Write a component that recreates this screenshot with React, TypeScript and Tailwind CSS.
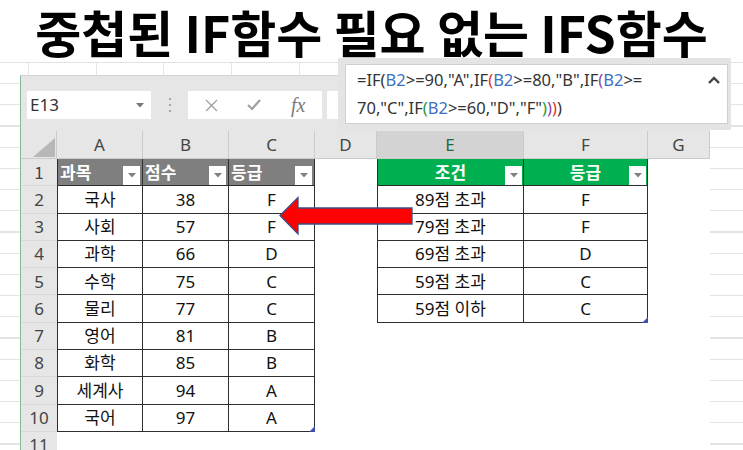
import React from "react";

const UI = '"Noto Sans", "Noto Sans CJK KR", sans-serif';
const KR = '"Noto Sans CJK KR", "Noto Sans", sans-serif';

const LINE = "border-[#2e2e2e]";

function RowHead({ n }: { n: number }) {
  return (
    <div className="w-[36px] shrink-0 bg-[#e6e6e6] border-b border-[#dadada] flex items-center justify-center text-[17px] text-[#444]">
      {n}
    </div>
  );
}

function FilterButton() {
  return (
    <div className="w-[17px] h-[19px] bg-white flex items-center justify-center">
      <svg width="8" height="5" viewBox="0 0 8 5">
        <polygon points="0,0 8,0 4,4.5" fill="#808080" />
      </svg>
    </div>
  );
}

function Blank({ w }: { w: string }) {
  return <div className={`${w} shrink-0 bg-white`} />;
}

function Data({
  w,
  text,
  left,
  handle,
}: {
  w: string;
  text: string;
  left?: boolean;
  handle?: boolean;
}) {
  return (
    <div
      className={`${w} shrink-0 relative bg-white border-b border-r ${LINE} ${left ? "border-l" : ""} flex items-center justify-center text-[17px] text-[#111]`}
    >
      {text}
      {handle && (
        <div className="absolute right-[-1px] bottom-[-1px] w-0 h-0 border-l-[6px] border-l-transparent border-b-[6px] border-b-[#3d4fb5]" />
      )}
    </div>
  );
}

function GrayHead({ w, text, left }: { w: string; text: string; left?: boolean }) {
  return (
    <div
      className={`${w} shrink-0 bg-[#7f7f7f] border-b border-r ${LINE} ${left ? "border-l" : ""} flex items-end justify-between pl-[2px] pr-[2px] text-white font-bold text-[17px]`}
    >
      <span className="self-center">{text}</span>
      <FilterButton />
    </div>
  );
}

function GreenHead({ w, text, left }: { w: string; text: string; left?: boolean }) {
  return (
    <div
      className={`${w} shrink-0 relative bg-[#00b050] border-b border-r ${LINE} ${left ? "border-l" : ""} flex items-center justify-center text-white font-bold text-[17px]`}
    >
      {text}
      <div className="absolute right-[1px] bottom-0">
        <FilterButton />
      </div>
    </div>
  );
}

const scores: [string, string, string][] = [
  ["국사", "38", "F"],
  ["사회", "57", "F"],
  ["과학", "66", "D"],
  ["수학", "75", "C"],
  ["물리", "77", "C"],
  ["영어", "81", "B"],
  ["화학", "85", "B"],
  ["세계사", "94", "A"],
  ["국어", "97", "A"],
];

const rules: [string, string][] = [
  ["89점 초과", "F"],
  ["79점 초과", "F"],
  ["69점 초과", "D"],
  ["59점 초과", "C"],
  ["59점 이하", "C"],
];

function ColHead({ w, label, active }: { w: string; label: string; active?: boolean }) {
  return (
    <div
      className={`${w} shrink-0 border-r border-b border-[#cbcbcb] flex items-center justify-center text-[17px] ${active ? "bg-[#d3d3d3] text-[#1e6b3c]" : "bg-[#e6e6e6] text-[#444]"}`}
    >
      {label}
    </div>
  );
}

function FormulaBar() {
  const ref = "text-[#3d70c2]";
  return (
    <div className="absolute left-[338px] top-[58px] w-[393px] h-[72px] bg-[#e4e4e4] pt-[6px] pl-[7px] pr-[3px] pb-[6px]">
      <div className="relative h-full bg-white border border-[#cfcfcf] pl-[11px] pt-[1px] text-[16.5px] leading-[28px] text-[#333]" style={{ fontFamily: UI }}>
        <div>
          =IF(<span className={ref}>B2</span>&gt;=90,"A",IF<span className="text-[#d9342b]">(</span>
          <span className={ref}>B2</span>&gt;=80,"B",IF<span className="text-[#8a3fb0]">(</span>
          <span className={ref}>B2</span>&gt;=
        </div>
        <div>
          70,"C",IF<span className="text-[#1e9a3e]">(</span>
          <span className={ref}>B2</span>&gt;=60,"D","F"
          <span className="text-[#1e9a3e]">)</span>
          <span className="text-[#8a3fb0]">)</span>
          <span className="text-[#d9342b]">)</span>)
        </div>
        <svg className="absolute right-[6px] top-[10px]" width="14" height="10" viewBox="0 0 14 10">
          <polyline points="2,8 7,3 12,8" fill="none" stroke="#444" strokeWidth="2.4" />
        </svg>
      </div>
    </div>
  );
}

function Arrow() {
  return (
    <svg className="absolute left-[276px] top-[194px]" width="140" height="45" viewBox="0 0 140 45">
      <polygon
        points="4,21.5 22,3.5 22,14 136,14 136,30 22,30 22,40"
        fill="#ff0000"
        stroke="#3b4f86"
        strokeWidth="1.3"
        strokeLinejoin="miter"
      />
    </svg>
  );
}

export default function App() {
  return (
    <div className="relative w-[743px] h-[450px] overflow-hidden bg-white" style={{ fontFamily: UI }}>
      <div
        className="h-[63px] border-b border-[#e2e2e2] flex items-center justify-center text-[50px] font-bold leading-[60px] text-black"
        style={{ fontFamily: KR }}
      >
        중첩된 IF함수 필요 없는 IFS함수
      </div>

      <div className="flex h-[387px] bg-[image:repeating-linear-gradient(to_bottom,transparent_0px,transparent_20px,#e4e4e4_20px,#e4e4e4_21.2px),repeating-linear-gradient(to_right,transparent_0px,transparent_28px,#e6e6e6_28px,#e6e6e6_29px,transparent_29px,transparent_67.7px)]">
        <div className="w-[20px] shrink-0" />
        <div className="w-[690px] shrink-0 mt-[12px] h-[375px] overflow-hidden bg-[#e6e6e6] border-l border-[#86bb98] border-t border-t-[#d4d4d4] flex flex-col">
          {/* name box and function buttons */}
          <div className="h-[55px] shrink-0 flex items-start pt-[15px]">
            <div className="ml-[6px] w-[124px] h-[28px] bg-white flex items-center justify-between pl-[3px] pr-[7px] text-[17px] text-[#333]">
              <span>E13</span>
              <svg width="8" height="5" viewBox="0 0 8 5">
                <polygon points="0,0 8,0 4,4.5" fill="#777" />
              </svg>
            </div>
            <div className="w-[37px] h-[28px] flex flex-col items-center justify-center gap-[4px]">
              <div className="w-[2px] h-[2px] bg-[#a6a6a6]" />
              <div className="w-[2px] h-[2px] bg-[#a6a6a6]" />
              <div className="w-[2px] h-[2px] bg-[#a6a6a6]" />
            </div>
            <div className="w-[134px] h-[28px] bg-white flex items-center">
              <svg className="ml-[17px]" width="13" height="13" viewBox="0 0 13 13">
                <path d="M1 1 L12 12 M12 1 L1 12" stroke="#a0a0a0" strokeWidth="1.3" />
              </svg>
              <svg className="ml-[29px]" width="14" height="12" viewBox="0 0 14 12">
                <path d="M1 6 L5 10 L13 1" fill="none" stroke="#a0a0a0" strokeWidth="2.2" />
              </svg>
              <span
                className="ml-[30px] italic text-[20px] text-[#7a7a7a] leading-none"
                style={{ fontFamily: '"Liberation Serif", serif' }}
              >
                fx
              </span>
            </div>
            <div className="ml-[5px] flex-1 h-[28px] bg-white" />
          </div>

          {/* column headers */}
          <div className="flex h-[28px] shrink-0">
            <div className="w-[36px] shrink-0 bg-[#e6e6e6] border-r border-b border-[#cbcbcb] relative">
              <svg className="absolute left-[12px] top-[7px]" width="22" height="19" viewBox="0 0 22 19">
                <polygon points="22,0 22,19 0,19" fill="#b7b7b7" />
              </svg>
            </div>
            <ColHead w="w-[86px]" label="A" />
            <ColHead w="w-[86px]" label="B" />
            <ColHead w="w-[86px]" label="C" />
            <ColHead w="w-[62px]" label="D" />
            <ColHead w="w-[147px]" label="E" active />
            <ColHead w="w-[124px]" label="F" />
            <ColHead w="w-[62px]" label="G" />
          </div>

          {/* row 1: table headers */}
          <div className="flex h-[27.3px] shrink-0" style={{ fontFamily: KR }}>
            <RowHead n={1} />
            <GrayHead w="w-[86px]" text="과목" left />
            <GrayHead w="w-[86px]" text="점수" />
            <GrayHead w="w-[86px]" text="등급" />
            <Blank w="w-[62px]" />
            <GreenHead w="w-[147px]" text="조건" left />
            <GreenHead w="w-[124px]" text="등급" />
            <Blank w="w-[62px]" />
          </div>

          {scores.map(([subject, score, grade], i) => {
            const rule = rules[i];
            return (
              <div key={subject} className="flex h-[27.3px] shrink-0">
                <RowHead n={i + 2} />
                <Data w="w-[86px]" text={subject} left />
                <Data w="w-[86px]" text={score} />
                <Data w="w-[86px]" text={grade} handle={i === scores.length - 1} />
                <Blank w="w-[62px]" />
                {rule ? (
                  <>
                    <Data w="w-[147px]" text={rule[0]} left />
                    <Data w="w-[124px]" text={rule[1]} handle={i === rules.length - 1} />
                  </>
                ) : (
                  <>
                    <Blank w="w-[147px]" />
                    <Blank w="w-[124px]" />
                  </>
                )}
                <Blank w="w-[62px]" />
              </div>
            );
          })}

          <div className="flex h-[27.3px] shrink-0">
            <RowHead n={11} />
            <div className="flex-1 bg-white" />
          </div>
        </div>
      </div>

      <FormulaBar />
      <Arrow />
    </div>
  );
}
